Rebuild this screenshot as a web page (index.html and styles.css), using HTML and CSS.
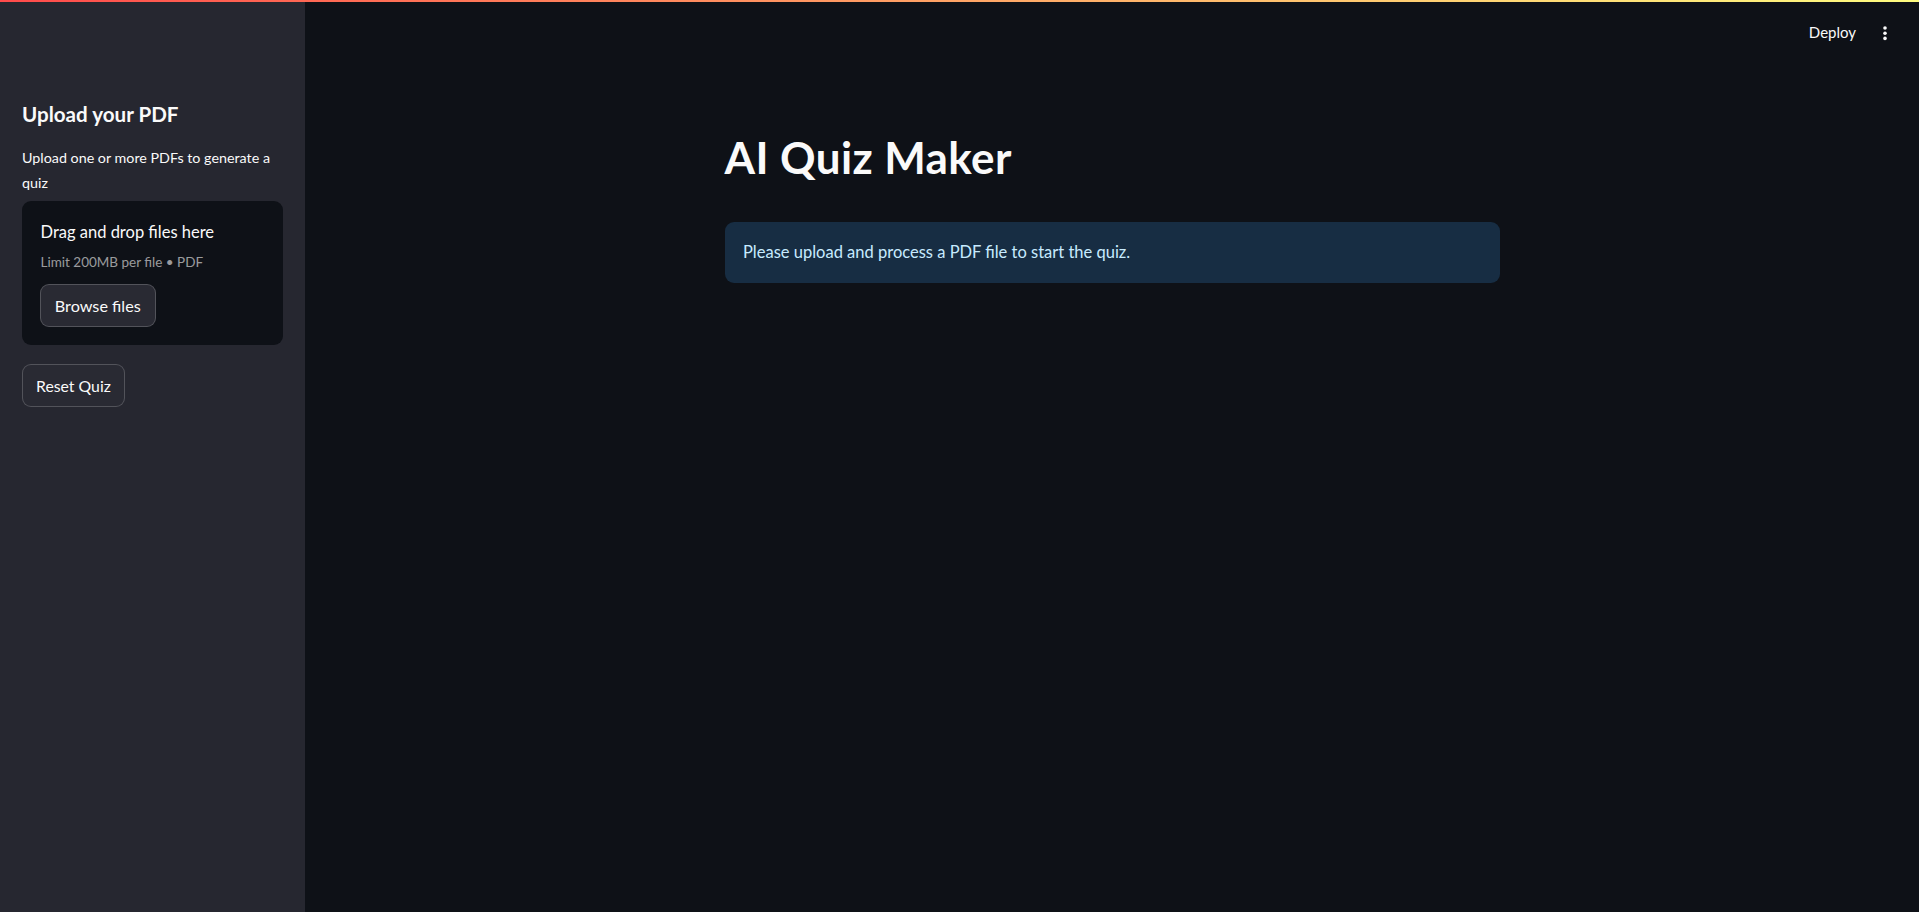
FILE: index.html
```html
<!DOCTYPE html>
<html lang="en">
<head>
<meta charset="utf-8">
<title>AI Quiz Maker</title>
<link rel="stylesheet" href="styles.css">
</head>
<body>
<div class="decoration"></div>
<div class="app">
  <aside class="sidebar">
    <h3 class="side-title">Upload your PDF</h3>
    <p class="side-text">Upload one or more PDFs to generate a quiz</p>
    <section class="dropzone">
      <div class="drop-title">Drag and drop files here</div>
      <div class="drop-limit">Limit 200MB per file • PDF</div>
      <button class="btn btn-browse">Browse files</button>
    </section>
    <button class="btn btn-reset">Reset Quiz</button>
  </aside>
  <main class="main">
    <header class="topbar">
      <span class="deploy">Deploy</span>
      <svg class="menu" width="4" height="15" viewBox="0 0 4 15" aria-hidden="true">
        <circle cx="2" cy="2" r="1.8" fill="#fafafa"/>
        <circle cx="2" cy="7.2" r="1.8" fill="#fafafa"/>
        <circle cx="2" cy="12.4" r="1.8" fill="#fafafa"/>
      </svg>
    </header>
    <div class="block">
      <h1 class="title">AI Quiz Maker</h1>
      <div class="info">Please upload and process a PDF file to start the quiz.</div>
    </div>
  </main>
</div>
</body>
</html>
```

FILE: styles.css
```css
* { box-sizing: border-box; }

html, body {
  margin: 0;
  padding: 0;
  height: 100%;
}

body {
  background: #0e1117;
  color: #fafafa;
  font-family: Lato, "Noto Sans", sans-serif;
  overflow: hidden;
}

.decoration {
  height: 2px;
  background: linear-gradient(90deg, rgb(255, 75, 75), rgb(255, 253, 128));
}

.app {
  display: flex;
  height: calc(100vh - 2px);
}

.sidebar {
  width: 305px;
  flex: 0 0 305px;
  background: #262730;
  padding: 99px 22px 0 22px;
  display: flex;
  flex-direction: column;
  align-items: flex-start;
}

.side-title {
  margin: 0;
  font-size: 20.6px;
  line-height: 26px;
  font-weight: 700;
  color: #fafafa;
}

.side-text {
  margin: 19px 0 0 0;
  font-size: 14.3px;
  line-height: 24.6px;
  color: #fafafa;
}

.dropzone {
  margin-top: 5.4px;
  width: 261px;
  height: 144px;
  background: #0e1117;
  border-radius: 9px;
  padding: 20px 18px 0 18.5px;
  display: flex;
  flex-direction: column;
  align-items: flex-start;
}

.drop-title {
  font-size: 16.5px;
  line-height: 22px;
  color: #fafafa;
}

.drop-limit {
  margin-top: 9.8px;
  font-size: 13.5px;
  line-height: 20px;
  color: rgba(250, 250, 250, 0.6);
}

.btn {
  font-family: Lato, "Noto Sans", sans-serif;
  height: 43.4px;
  padding: 0 14px;
  border: 1px solid rgba(250, 250, 250, 0.2);
  border-radius: 9px;
  background: #292a33;
  color: #fafafa;
  font-size: 16.2px;
  display: flex;
  align-items: center;
}

.btn-browse {
  margin-top: 11.6px;
  margin-left: -0.7px;
}

.btn-reset {
  margin-top: 19px;
  padding: 0 13px;
  font-size: 15.8px;
}

.main {
  flex: 1;
  display: flex;
  flex-direction: column;
  min-width: 0;
}

.topbar {
  height: 60px;
  display: flex;
  align-items: center;
  justify-content: flex-end;
  padding-right: 32px;
  gap: 27px;
}

.deploy {
  font-size: 15px;
  line-height: 20px;
  color: #fafafa;
}

.menu {
  margin-top: 3px;
}

.block {
  width: 775px;
  margin: 0 auto;
  padding-top: 68.7px;
}

.title {
  margin: 0;
  font-size: 44px;
  line-height: 52px;
  font-weight: 700;
  letter-spacing: 0.4px;
  color: #fafafa;
}

.info {
  margin-top: 39.6px;
  height: 60.4px;
  padding: 17.2px 18.5px;
  background: #172d43;
  color: #c7ebff;
  border-radius: 9px;
  font-size: 16.5px;
  line-height: 26px;
}
```
